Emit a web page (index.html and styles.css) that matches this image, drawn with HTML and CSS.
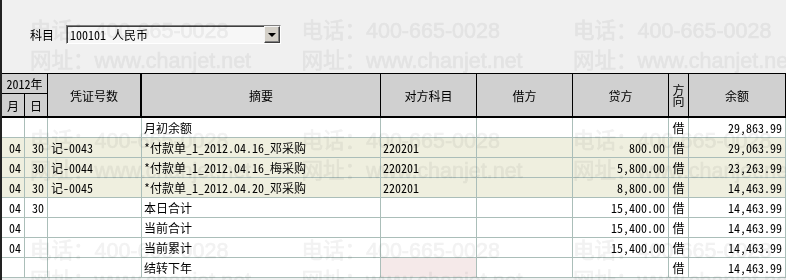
FILE: index.html
```html
<!DOCTYPE html>
<html lang="zh-CN">
<head>
<meta charset="utf-8">
<title>明细账</title>
<link rel="stylesheet" href="styles.css">
</head>
<body>
<div class="window">
  <div class="toolbar">
    <span class="label">科目</span>
    <div class="select">
      <span class="select-value">100101 人民币</span>
      <span class="select-btn"><span class="arrow"></span></span>
    </div>
  </div>

  <div class="ledger">
    <div class="head">
      <div class="h h-year">2012年</div>
      <div class="h h-month">月</div>
      <div class="h h-day">日</div>
      <div class="h h-voucher">凭证号数</div>
      <div class="h h-tall">摘要</div>
      <div class="h h-tall">对方科目</div>
      <div class="h h-tall">借方</div>
      <div class="h h-tall">贷方</div>
      <div class="h h-tall h-dir">方<br>向</div>
      <div class="h h-tall">余额</div>
    </div>

    <div class="row">
      <div class="c r"></div><div class="c r"></div><div class="c l"></div>
      <div class="c l">月初余额</div><div class="c l"></div><div class="c r"></div>
      <div class="c r"></div><div class="c m">借</div><div class="c r">29,863.99</div>
    </div>
    <div class="row alt">
      <div class="c r">04</div><div class="c r">30</div><div class="c l">记-0043</div>
      <div class="c l">*付款单_1_2012.04.16_邓采购</div><div class="c l">220201</div><div class="c r"></div>
      <div class="c r">800.00</div><div class="c m">借</div><div class="c r">29,063.99</div>
    </div>
    <div class="row alt">
      <div class="c r">04</div><div class="c r">30</div><div class="c l">记-0044</div>
      <div class="c l">*付款单_1_2012.04.16_梅采购</div><div class="c l">220201</div><div class="c r"></div>
      <div class="c r">5,800.00</div><div class="c m">借</div><div class="c r">23,263.99</div>
    </div>
    <div class="row alt">
      <div class="c r">04</div><div class="c r">30</div><div class="c l">记-0045</div>
      <div class="c l">*付款单_1_2012.04.20_邓采购</div><div class="c l">220201</div><div class="c r"></div>
      <div class="c r">8,800.00</div><div class="c m">借</div><div class="c r">14,463.99</div>
    </div>
    <div class="row">
      <div class="c r">04</div><div class="c r">30</div><div class="c l"></div>
      <div class="c l">本日合计</div><div class="c l"></div><div class="c r"></div>
      <div class="c r">15,400.00</div><div class="c m">借</div><div class="c r">14,463.99</div>
    </div>
    <div class="row">
      <div class="c r">04</div><div class="c r"></div><div class="c l"></div>
      <div class="c l">当前合计</div><div class="c l"></div><div class="c r"></div>
      <div class="c r">15,400.00</div><div class="c m">借</div><div class="c r">14,463.99</div>
    </div>
    <div class="row">
      <div class="c r">04</div><div class="c r"></div><div class="c l"></div>
      <div class="c l">当前累计</div><div class="c l"></div><div class="c r"></div>
      <div class="c r">15,400.00</div><div class="c m">借</div><div class="c r">14,463.99</div>
    </div>
    <div class="row">
      <div class="c r"></div><div class="c r"></div><div class="c l"></div>
      <div class="c l">结转下年</div><div class="c l sel"></div><div class="c r"></div>
      <div class="c r"></div><div class="c m">借</div><div class="c r">14,463.99</div>
    </div>
  </div>

  <div class="watermarks">
    <div class="wm">电话：400-665-0028<br>网址：www.chanjet.net</div>
    <div class="wm">电话：400-665-0028<br>网址：www.chanjet.net</div>
    <div class="wm">电话：400-665-0028<br>网址：www.chanjet.net</div>
    <div class="wm">电话：400-665-0028<br>网址：www.chanjet.net</div>
    <div class="wm">电话：400-665-0028<br>网址：www.chanjet.net</div>
    <div class="wm">电话：400-665-0028<br>网址：www.chanjet.net</div>
    <div class="wm">电话：400-665-0028<br>网址：www.chanjet.net</div>
    <div class="wm">电话：400-665-0028<br>网址：www.chanjet.net</div>
    <div class="wm">电话：400-665-0028<br>网址：www.chanjet.net</div>
  </div>
</div>
</body>
</html>
```
FILE: styles.css
```css
html, body {
  margin: 0;
  padding: 0;
}
body {
  width: 786px;
  height: 280px;
  overflow: hidden;
  background: #f0f0f0;
  color: #000;
  font-family: "Noto Sans Mono CJK SC", "Noto Sans CJK SC", "DejaVu Sans Mono", monospace;
  font-size: 12px;
}
.window {
  position: relative;
  height: 280px;
  box-sizing: border-box;
  border-left: 2px solid #222;
  overflow: hidden;
}

/* toolbar */
.toolbar {
  height: 73px;
  box-sizing: border-box;
  padding: 25px 0 0 28px;
  display: flex;
  align-items: flex-start;
  gap: 12px;
}
.label {
  height: 19px;
  line-height: 19px;
}
.select {
  width: 215px;
  height: 19px;
  box-sizing: border-box;
  display: flex;
  background: #f7f7f7;
  border-top: 1px solid #808080;
  border-left: 1px solid #808080;
  border-right: 1px solid #fff;
  border-bottom: 1px solid #fff;
  box-shadow: inset 1px 1px 0 #404040;
}
.select-value {
  flex: 1;
  padding-left: 3px;
  line-height: 17px;
  white-space: pre;
}
.select-btn {
  width: 16px;
  height: 17px;
  box-sizing: border-box;
  background: #d4d0c8;
  border-style: solid;
  border-width: 1px;
  border-color: #f4f4f4 #404040 #404040 #f4f4f4;
  box-shadow: inset -1px -1px 0 #808080;
  display: flex;
  align-items: center;
  justify-content: center;
}
.arrow {
  width: 0;
  height: 0;
  border-left: 4px solid transparent;
  border-right: 4px solid transparent;
  border-top: 4px solid #000;
  margin-top: 1px;
}

/* ledger grid */
.head, .row {
  display: grid;
  grid-template-columns: 23px 23px 94px 239px 96px 96px 96px 20px 97px;
}
.head {
  grid-template-rows: 20px 22px;
  background: #d0d0d0;
  border-top: 1px solid #000;
  border-bottom: 2px solid #000;
}
.h {
  box-sizing: border-box;
  border-right: 1px solid #000;
  display: flex;
  align-items: center;
  justify-content: center;
  text-align: center;
  white-space: nowrap;
}
.h-year {
  grid-column: 1 / 3;
  grid-row: 1;
  border-bottom: 1px solid #000;
}
.h-month { grid-column: 1; grid-row: 2; }
.h-day { grid-column: 2; grid-row: 2; }
.h-voucher {
  grid-column: 3;
  grid-row: 1 / 3;
  border-right-width: 2px;
}
.h-tall { grid-row: 1 / 3; }
.h-dir { line-height: 11px; }

.row {
  height: 20px;
  background: #fff;
}
.row.alt { background: #efefdf; }
.c {
  box-sizing: border-box;
  border-right: 1px solid #abbeb9;
  border-bottom: 1px solid #abbeb9;
  display: flex;
  align-items: center;
  white-space: pre;
  overflow: hidden;
}
.c.r { justify-content: flex-end; padding-right: 3px; }
.c.l { justify-content: flex-start; padding-left: 2px; }
.c.m { justify-content: center; }
.row .c:nth-child(3) { padding-left: 3px; }
.c.sel { background: #f5e9e9; }

/* watermark overlay */
.watermarks {
  position: absolute;
  top: 16px;
  left: 28px;
  display: grid;
  grid-template-columns: repeat(3, 271.5px);
  grid-auto-rows: 110px;
  pointer-events: none;
  mix-blend-mode: multiply;
}
.wm {
  font-family: "Liberation Sans", "Noto Sans CJK SC", sans-serif;
  font-size: 21.5px;
  line-height: 30px;
  white-space: nowrap;
  color: #f2f2f2;
  -webkit-text-stroke: 0.6px #f2f2f2;
}
```
